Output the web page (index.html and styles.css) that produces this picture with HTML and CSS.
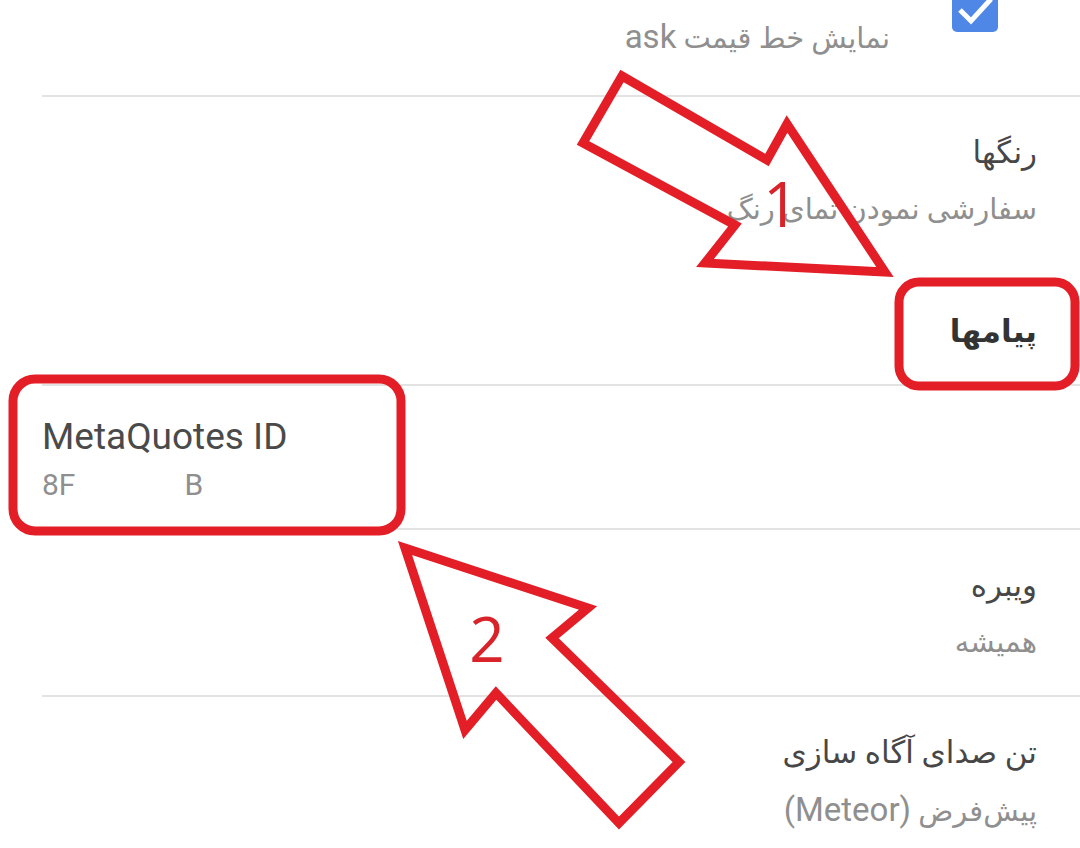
FILE: index.html
```html
<html dir="rtl" lang="fa">

<head>
    <meta charset="utf-8">
    <title>تنظیمات</title>
    <link rel="stylesheet" href="styles.css">
</head>

<body>
    <main class="settings">
        <div class="pref pref-top">
            <span class="checkbox">
                <svg width="46" height="46" viewBox="0 0 46 46">
                    <polyline points="8,24 19,35 39,13" fill="none" stroke="#fff" stroke-width="5"/>
                </svg>
            </span>
            <div class="pref-text">
                <div class="pref-title">خط <span class="latin">ask</span></div>
                <div class="pref-summary">نمایش خط قیمت <span class="latin">ask</span></div>
            </div>
        </div>
        <div class="pref pref-last">
            <div class="pref-text">
                <div class="pref-title">رنگها</div>
                <div class="pref-summary">سفارشی نمودن تمای رنگ</div>
            </div>
        </div>
        <div class="category">پیامها</div>
        <div class="pref pref-ltr">
            <div class="pref-text">
                <div class="pref-title">MetaQuotes ID</div>
                <div class="pref-summary">8F<span class="hidden-part"></span>B</div>
            </div>
        </div>
        <div class="pref">
            <div class="pref-text">
                <div class="pref-title">ویبره</div>
                <div class="pref-summary">همیشه</div>
            </div>
        </div>
        <div class="pref">
            <div class="pref-text">
                <div class="pref-title">تن صدای آگاه سازی</div>
                <div class="pref-summary">پیش‌فرض <span class="latin">(Meteor)</span></div>
            </div>
        </div>

        <svg class="annotations" width="1080" height="848" viewBox="0 0 1080 848">
            <!-- arrow 1 -> category -->
            <polygon points="583,143 622,76 767,160 787,124 885,272 705,263 735,225"/>
            <text x="781" y="227" class="mark">1</text>
            <rect x="899" y="282" width="176" height="104" rx="20"/>
            <!-- arrow 2 -> id -->
            <rect x="13" y="379" width="388" height="152" rx="22"/>
            <polygon points="405,548 588,608 552,638 679,762 619,823 496,693 465,730"/>
            <text x="487" y="662" class="mark">2</text>
        </svg>
    </main>
</body>

</html>
```

FILE: styles.css
```css
body {
    margin: 0;
    background: #fff;
    overflow: hidden;
    font-family: Roboto, "DejaVu Sans", sans-serif;
}

.settings {
    position: relative;
    height: 848px;
    overflow: hidden;
}

.pref {
    display: flex;
    align-items: center;
    margin-left: 42px;
    padding: 28px 43px 24px 0;
    border-bottom: 2px solid #e3e3e3;
}

.pref-top {
    margin-top: -76px;
    padding-bottom: 30px;
}

.pref-last {
    border-bottom: none;
}

.pref-text {
    flex: 1;
}

.pref-title,
.pref-summary {
    unicode-bidi: plaintext;
    text-align: start;
    white-space: nowrap;
}

.pref-title {
    height: 56px;
    font-size: 31px;
    line-height: 56px;
    color: #474747;
}

.pref-summary {
    height: 57px;
    font-size: 29px;
    line-height: 57px;
    color: #8f8f8f;
}

.pref-summary .latin {
    font-size: 33px;
}

.pref-ltr {
    padding-bottom: 18px;
}

.pref-ltr .pref-title {
    height: 46px;
    font-size: 37px;
    line-height: 46px;
    color: #4a4a4a;
}

.pref-ltr .pref-summary {
    height: 50px;
    font-size: 30px;
    line-height: 50px;
}

.hidden-part {
    display: inline-block;
    width: 109px;
}

.checkbox {
    display: flex;
    width: 46px;
    height: 46px;
    margin: 0 0 0 62px;
    margin-right: 39px;
    border-radius: 5px;
    background: #4f87e6;
}

.category {
    height: 52px;
    margin-left: 42px;
    padding: 44px 43px 26px 0;
    font-size: 31px;
    line-height: 52px;
    font-weight: bold;
    color: #333;
    border-bottom: 2px solid #e3e3e3;
}

.annotations {
    position: absolute;
    top: 0;
    left: 0;
    pointer-events: none;
}

.annotations polygon,
.annotations rect {
    fill: none;
    stroke: #e31e27;
    stroke-width: 9;
    stroke-linejoin: miter;
}

.annotations .mark {
    font-family: "Open Sans", sans-serif;
    font-size: 62px;
    fill: #d8232a;
    text-anchor: middle;
}
```
